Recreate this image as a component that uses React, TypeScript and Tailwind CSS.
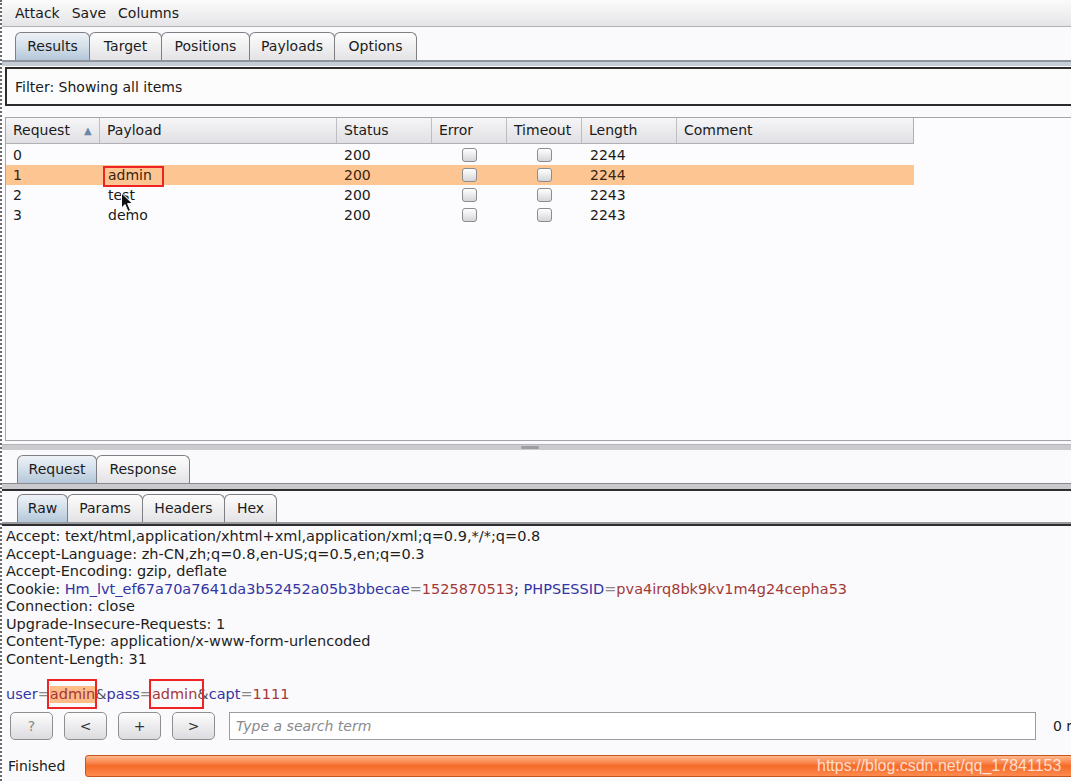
import React from 'react'

const UI = "'DejaVu Sans', 'Noto Sans', sans-serif"

const mainTabs = [
  { label: 'Results', w: 75, active: true },
  { label: 'Target', w: 73 },
  { label: 'Positions', w: 89 },
  { label: 'Payloads', w: 86 },
  { label: 'Options', w: 83 },
]

const columns = [
  { label: 'Request', w: 94 },
  { label: 'Payload', w: 237 },
  { label: 'Status', w: 95 },
  { label: 'Error', w: 75 },
  { label: 'Timeout', w: 75 },
  { label: 'Length', w: 95 },
  { label: 'Comment', w: 236 },
]

const rows = [
  { id: '0', payload: '', status: '200', length: '2244' },
  { id: '1', payload: 'admin', status: '200', length: '2244', selected: true },
  { id: '2', payload: 'test', status: '200', length: '2243' },
  { id: '3', payload: 'demo', status: '200', length: '2243' },
]

const Tab = ({ label, w, active }: { label: string; w: number; active?: boolean }) => (
  <div
    className={`h-[28px] flex items-center justify-center rounded-t-[6px] border border-b-0 border-[#7d7f84] -ml-px first:ml-0 text-[14px] text-[#1c1c1c] ${
      active
        ? 'bg-gradient-to-b from-[#eef2f7] via-[#d3dfea] to-[#b4c7d9]'
        : 'bg-gradient-to-b from-[#fdfdfd] to-[#e3e3e6]'
    }`}
    style={{ width: w }}
  >
    {label}
  </div>
)

const Checkbox = () => (
  <div className="w-[15px] h-[14px] rounded-[3px] border border-[#8c8c90] bg-gradient-to-b from-[#ffffff] to-[#d6d6da]" />
)

const Btn = ({ children }: { children: React.ReactNode }) => (
  <div className="w-[43px] h-[28px] rounded-[5px] border border-[#8e8e92] bg-gradient-to-b from-[#fdfdfd] to-[#dcdce0] flex items-center justify-center text-[14px] text-[#333]">
    {children}
  </div>
)

const K = ({ children }: { children: React.ReactNode }) => <span className="text-[#3434a4]">{children}</span>
const V = ({ children }: { children: React.ReactNode }) => <span className="text-[#a43838]">{children}</span>
const Eq = () => <span className="text-[#8a8a8a]">=</span>

export default function App() {
  return (
    <div
      className="w-[1071px] h-[781px] overflow-hidden bg-[#fafafc] border-l-2 border-dotted border-[#6a6a6a] flex flex-col text-[#1a1a1a]"
      style={{ fontFamily: UI }}
    >
      {/* menu bar */}
      <div className="h-[27px] shrink-0 flex items-center gap-[12px] pl-[13px] text-[14px] bg-gradient-to-b from-[#fbfbfb] to-[#e5e5e8] border-b border-[#b2b2b6]">
        <span>Attack</span>
        <span>Save</span>
        <span>Columns</span>
      </div>

      {/* main tabs */}
      <div className="h-[33px] shrink-0 flex items-end pl-[13px]">
        {mainTabs.map((t) => (
          <Tab key={t.label} {...t} />
        ))}
      </div>
      <div className="h-[2px] shrink-0 bg-[#8d949e]" />
      <div className="h-[4px] shrink-0 bg-[#c6ccd4]" />
      <div className="h-[1px] shrink-0" />

      {/* filter */}
      <div className="h-[39px] shrink-0 ml-[3px] -mr-[10px] border-2 border-[#2b2b2b] bg-[#fcfcfd] flex items-center pl-[8px] pt-[2px] text-[14px]">
        Filter: Showing all items
      </div>

      {/* results table */}
      <div className="h-[324px] shrink-0 mt-[11px] ml-[3px] border-t border-l border-b border-[#a4a4a8] bg-[#fcfcfe] relative">
        <div className="flex h-[26px] w-[908px] bg-gradient-to-b from-[#f6f6f8] to-[#e0e0e4] border-b border-r border-[#b0b0b4]">
          {columns.map((c, i) => (
            <div
              key={c.label}
              className={`h-full flex items-center pl-[7px] text-[14px] ${i < columns.length - 1 ? 'border-r border-[#bdbdc2]' : ''}`}
              style={{ width: c.w }}
            >
              {c.label}
              {c.label === 'Request' && <span className="ml-[14px] text-[10px] text-[#6b86a8]">▲</span>}
            </div>
          ))}
        </div>
        <div className="pt-[1px]">
          {rows.map((r) => (
            <div
              key={r.id}
              className={`flex h-[20px] w-[908px] items-center text-[14px] ${r.selected ? 'bg-[#fcc592] text-[#3b2412]' : ''}`}
            >
              <div className="pl-[7px]" style={{ width: 94 }}>{r.id}</div>
              <div className="pl-[8px] relative h-full flex items-center" style={{ width: 237 }}>
                {r.payload}
                {r.selected && (
                  <div className="absolute left-[3px] top-[1px] w-[61px] h-[21px] border-2 border-[#ee2424]" />
                )}
              </div>
              <div className="pl-[7px]" style={{ width: 95 }}>{r.status}</div>
              <div className="flex justify-center" style={{ width: 75 }}><Checkbox /></div>
              <div className="flex justify-center" style={{ width: 75 }}><Checkbox /></div>
              <div className="pl-[8px]" style={{ width: 95 }}>{r.length}</div>
              <div style={{ width: 236 }} />
            </div>
          ))}
        </div>
        {/* mouse cursor */}
        <svg className="absolute left-[114px] top-[74px]" width="15" height="21" viewBox="0 0 15 21">
          <path d="M1.5 1 L1.5 16 L5 12.5 L8 19.5 L10.5 18.3 L7.6 11.6 L12.5 11.6 Z" fill="#111" stroke="#fff" strokeWidth="1" strokeLinejoin="round" />
        </svg>
      </div>

      {/* splitter */}
      <div className="h-[3px] shrink-0" />
      <div className="h-[6px] shrink-0 bg-[#cbcbcf] border-t border-[#b6b6ba] flex justify-center">
        <div className="w-[18px] h-[3px] mt-[1px] rounded-[2px] bg-[#9c9ca2] ml-[-14px]" />
      </div>
      <div className="h-[5px] shrink-0" />

      {/* request / response tabs */}
      <div className="h-[28px] shrink-0 flex items-end pl-[15px]">
        <Tab label="Request" w={80} active />
        <Tab label="Response" w={94} />
      </div>
      <div className="h-[1px] shrink-0 bg-[#8a8a8e]" />
      <div className="h-[5px] shrink-0 bg-[#cacace]" />
      <div className="h-[2px] shrink-0 bg-[#2e2e30]" />
      <div className="h-[3px] shrink-0" />

      {/* raw / params tabs */}
      <div className="h-[28px] shrink-0 flex items-end pl-[15px]">
        <Tab label="Raw" w={51} active />
        <Tab label="Params" w={76} />
        <Tab label="Headers" w={83} />
        <Tab label="Hex" w={53} />
      </div>
      <div className="h-[2px] shrink-0 bg-[#9a9a9e]" />
      <div className="h-[2px] shrink-0 bg-[#2e2e30]" />

      {/* raw request */}
      <div className="shrink-0 pl-[4px] pt-[2px] text-[14.5px] leading-[17.5px] text-[#1e1e1e] whitespace-pre">
        <div>Accept: text/html,application/xhtml+xml,application/xml;q=0.9,*/*;q=0.8</div>
        <div>Accept-Language: zh-CN,zh;q=0.8,en-US;q=0.5,en;q=0.3</div>
        <div>Accept-Encoding: gzip, deflate</div>
        <div>
          Cookie: <K>Hm_lvt_ef67a70a7641da3b52452a05b3bbecae</K><Eq /><V>1525870513</V>; <K>PHPSESSID</K><Eq /><V>pva4irq8bk9kv1m4g24cepha53</V>
        </div>
        <div>Connection: close</div>
        <div>Upgrade-Insecure-Requests: 1</div>
        <div>Content-Type: application/x-www-form-urlencoded</div>
        <div>Content-Length: 31</div>
        <div>&nbsp;</div>
        <div>
          <K>user</K><Eq />
          <span className="relative inline-block bg-[#fdbb88] text-[#a43838]">
            admin
            <span className="absolute left-[-3px] right-[-2px] top-[-7px] bottom-[-6px] border-2 border-[#ee2424]" />
          </span>
          <span className="text-[#555]">&amp;</span><K>pass</K><Eq />
          <span className="relative inline-block text-[#a43838]">
            admin
            <span className="absolute left-[-3px] right-[-7px] top-[-7px] bottom-[-6px] border-2 border-[#ee2424]" />
          </span>
          <span className="text-[#555]">&amp;</span><K>capt</K><Eq /><V>1111</V>
        </div>
      </div>

      {/* search row */}
      <div className="h-[28px] shrink-0 mt-[9px] flex items-center pl-[8px]">
        <div className="flex gap-[11px] shrink-0">
          <Btn><span className="text-[#888]">?</span></Btn>
          <Btn>&lt;</Btn>
          <Btn>+</Btn>
          <Btn>&gt;</Btn>
        </div>
        <div className="ml-[14px] w-[807px] shrink-0 h-[28px] border border-[#9c9ca0] bg-white flex items-center pl-[6px] text-[14px] italic text-[#8a8a8e]">
          Type a search term
        </div>
        <div className="ml-[17px] text-[14px] whitespace-nowrap">0 matches</div>
      </div>

      {/* status */}
      <div className="h-[22px] shrink-0 mt-[15px] flex items-center pl-[6px]">
        <span className="w-[77px] text-[14px]">Finished</span>
        <div className="relative flex-1 h-[22px] -mr-[10px] rounded-l-[3px] border border-[#c4571f] bg-gradient-to-b from-[#ffb78a] via-[#f46a26] to-[#ff8a4e]">
          <span
            className="absolute left-[731px] top-[0px] text-[16px] leading-[20px] text-white/75"
            style={{ fontFamily: "'Liberation Sans', Arial, sans-serif" }}
          >
            https://blog.csdn.net/qq_17841153
          </span>
        </div>
      </div>
    </div>
  )
}
